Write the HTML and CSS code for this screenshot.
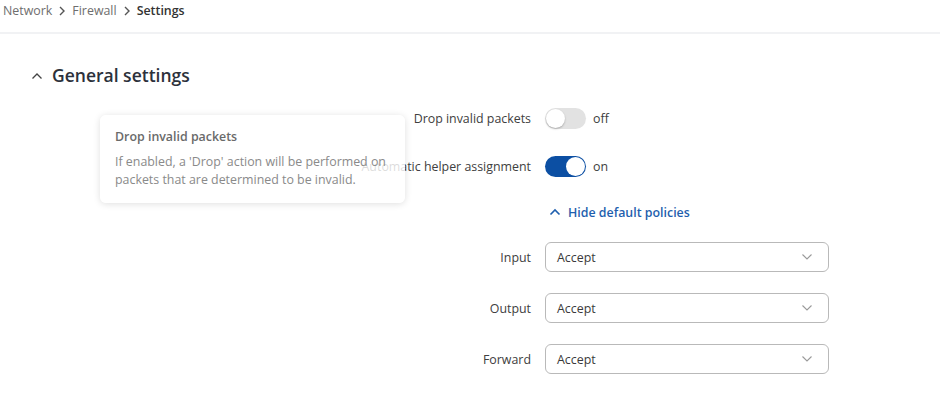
FILE: index.html
```html
<!DOCTYPE html>
<html>
<head>
<meta charset="utf-8">
<link rel="stylesheet" href="styles.css">
</head>
<body>
<div class="page">
  <nav class="crumbs">
    <span class="crumb">Network</span>
    <svg class="crumb-sep" viewBox="0 0 8 12" width="8" height="12"><path d="M2 2l4 4-4 4" fill="none" stroke="#555" stroke-width="1.4"/></svg>
    <span class="crumb">Firewall</span>
    <svg class="crumb-sep" viewBox="0 0 8 12" width="8" height="12"><path d="M2 2l4 4-4 4" fill="none" stroke="#555" stroke-width="1.4"/></svg>
    <span class="crumb current">Settings</span>
  </nav>

  <div class="section-title">
    <svg class="chev-up" viewBox="0 0 12 8" width="12" height="8"><path d="M1.5 6.5L6 2l4.5 4.5" fill="none" stroke="#444" stroke-width="1.3"/></svg>
    <h2>General settings</h2>
  </div>

  <div class="form">
    <div class="row r1">
      <label class="lbl">Drop invalid packets</label>
      <div class="ctl">
        <span class="toggle"><span class="knob"></span></span>
        <span class="state">off</span>
      </div>
    </div>
    <div class="row r2">
      <label class="lbl">Automatic helper assignment</label>
      <div class="ctl">
        <span class="toggle on"><span class="knob"></span></span>
        <span class="state">on</span>
      </div>
    </div>
    <div class="row r3">
      <span class="lbl"></span>
      <div class="ctl">
        <a class="link">
          <svg viewBox="0 0 12 8" width="12" height="8"><path d="M1.5 6.5L6 2l4.5 4.5" fill="none" stroke="#1f5fae" stroke-width="1.6"/></svg>
          Hide default policies
        </a>
      </div>
    </div>
    <div class="row r4">
      <label class="lbl">Input</label>
      <div class="ctl">
        <div class="select"><span>Accept</span><svg viewBox="0 0 12 8" width="12" height="8"><path d="M1.5 1.5L6 6l4.5-4.5" fill="none" stroke="#9a9a9a" stroke-width="1.1"/></svg></div>
      </div>
    </div>
    <div class="row r5">
      <label class="lbl">Output</label>
      <div class="ctl">
        <div class="select"><span>Accept</span><svg viewBox="0 0 12 8" width="12" height="8"><path d="M1.5 1.5L6 6l4.5-4.5" fill="none" stroke="#9a9a9a" stroke-width="1.1"/></svg></div>
      </div>
    </div>
    <div class="row r5">
      <label class="lbl">Forward</label>
      <div class="ctl">
        <div class="select"><span>Accept</span><svg viewBox="0 0 12 8" width="12" height="8"><path d="M1.5 1.5L6 6l4.5-4.5" fill="none" stroke="#9a9a9a" stroke-width="1.1"/></svg></div>
      </div>
    </div>
  </div>

  <div class="tooltip">
    <div class="tip-title">Drop invalid packets</div>
    <div class="tip-text">If enabled, a 'Drop' action will be performed on packets that are determined to be invalid.</div>
  </div>
</div>
</body>
</html>
```

FILE: styles.css
```css
* { box-sizing: border-box; }
html, body { margin: 0; padding: 0; background: #fff; }
body {
  font-family: "Open Sans", "Noto Sans", sans-serif;
  font-size: 12.4px;
  color: #3a3a3a;
}
.page { position: relative; width: 940px; height: 404px; overflow: hidden; }

.crumbs {
  height: 34px;
  padding: 1px 0 0 3px;
  display: flex;
  align-items: flex-start;
  gap: 6px;
  border-bottom: 2px solid #f1f2f4;
  line-height: 20px;
}
.crumb { color: #6e6e6e; }
.crumb.current { color: #333; font-weight: 600; }
.crumb-sep { margin-top: 4px; }

.section-title {
  margin-top: 29px;
  height: 24px;
  display: flex;
  align-items: center;
  padding-left: 31px;
}
.chev-up { margin-right: 9px; margin-top: 1px; }
.section-title h2 {
  margin: 0;
  font-size: 17.5px;
  font-weight: 600;
  color: #2c313b;
}

.form { padding-top: 16px; display: flex; flex-direction: column; }
.row { display: flex; align-items: center; height: 30px; }
.r2 { margin-top: 18px; }
.r3 { margin-top: 16px; }
.r4 { margin-top: 15px; }
.r5 { margin-top: 21px; }
.lbl {
  width: 545px;
  padding-right: 14px;
  text-align: right;
  color: #404040;
  white-space: nowrap;
}
.ctl { display: flex; align-items: center; }

.toggle {
  position: relative;
  width: 41px;
  height: 21px;
  border-radius: 11px;
  background: #e2e2e2;
}
.toggle .knob {
  position: absolute;
  top: 1px;
  left: 1px;
  width: 19px;
  height: 19px;
  border-radius: 50%;
  background: #fff;
  box-shadow: 0 1px 2px rgba(0,0,0,0.25);
}
.toggle.on { background: #0c4fa3; }
.toggle.on .knob { left: 21px; box-shadow: none; }
.state { margin-left: 7px; color: #404040; }

.link {
  display: flex;
  align-items: center;
  gap: 7px;
  padding-left: 4px;
  color: #1f5fae;
  font-weight: 600;
}

.select {
  width: 284px;
  height: 30px;
  border: 1px solid #b9b9b9;
  border-radius: 6px;
  display: flex;
  align-items: center;
  justify-content: space-between;
  padding: 0 15px 0 11px;
  color: #3a3a3a;
}

.tooltip {
  position: absolute;
  left: 100px;
  top: 115px;
  width: 305px;
  height: 88px;
  padding: 12px 10px 0 15px;
  background: rgba(255,255,255,0.82);
  border-radius: 6px;
  box-shadow: 0 1px 7px rgba(0,0,0,0.13);
}
.tip-title { font-weight: 600; color: #6a6a6a; line-height: 20px; }
.tip-text { margin-top: 6px; color: #8a8a8a; line-height: 18px; }
```
